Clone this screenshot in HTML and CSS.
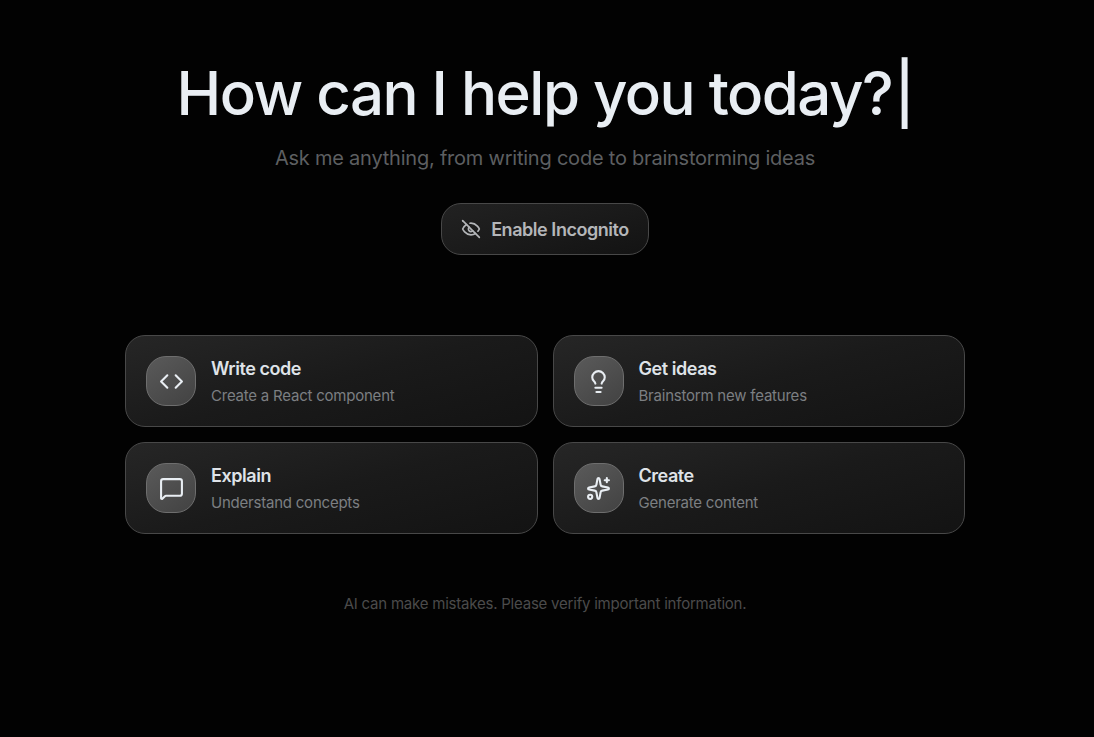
FILE: index.html
```html
<!DOCTYPE html>
<html lang="en">
<head>
<meta charset="utf-8">
<meta name="viewport" content="width=device-width, initial-scale=1">
<title>Assistant</title>
<link rel="stylesheet" href="styles.css">
</head>
<body>
<main class="welcome">
  <header class="hero">
    <h1 class="hero-title">How can I help you today?<span class="caret" aria-hidden="true">|</span></h1>
    <p class="hero-subtitle">Ask me anything, from writing code to brainstorming ideas</p>
    <button class="incognito" type="button">
      <svg class="icon-small" viewBox="0 0 24 24" aria-hidden="true"><path d="M9.88 9.88a3 3 0 1 0 4.24 4.24"/><path d="M10.73 5.08A10.43 10.43 0 0 1 12 5c7 0 10 7 10 7a13.16 13.16 0 0 1-1.67 2.68"/><path d="M6.61 6.61A13.526 13.526 0 0 0 2 12s3 7 10 7a9.74 9.74 0 0 0 5.39-1.61"/><path d="M2 2l20 20"/></svg>
      <span class="incognito-label">Enable Incognito</span>
    </button>
  </header>

  <section class="suggestions" aria-label="Suggestions">
    <button class="card" type="button">
      <span class="badge"><svg class="icon" viewBox="0 0 24 24" aria-hidden="true"><path d="m16 18 6-6-6-6"/><path d="m8 6-6 6 6 6"/></svg></span>
      <span class="card-text"><span class="card-title">Write code</span><span class="card-desc">Create a React component</span></span>
    </button>
    <button class="card" type="button">
      <span class="badge"><svg class="icon" viewBox="0 0 24 24" aria-hidden="true"><path d="M15 14c.2-1 .7-1.7 1.5-2.5 1-.9 1.5-2.2 1.5-3.5A6 6 0 0 0 6 8c0 1 .2 2.2 1.5 3.5.7.7 1.3 1.5 1.5 2.5"/><path d="M9 18h6"/><path d="M10 22h4"/></svg></span>
      <span class="card-text"><span class="card-title">Get ideas</span><span class="card-desc">Brainstorm new features</span></span>
    </button>
    <button class="card" type="button">
      <span class="badge"><svg class="icon" viewBox="0 0 24 24" aria-hidden="true"><path d="M22 17a2 2 0 0 1-2 2H6.828a2 2 0 0 0-1.414.586l-2.202 2.202A.71.71 0 0 1 2 21.286V5a2 2 0 0 1 2-2h16a2 2 0 0 1 2 2z"/></svg></span>
      <span class="card-text"><span class="card-title">Explain</span><span class="card-desc">Understand concepts</span></span>
    </button>
    <button class="card" type="button">
      <span class="badge"><svg class="icon" viewBox="0 0 24 24" aria-hidden="true"><path d="M11.017 2.814a1 1 0 0 1 1.966 0l1.051 5.558a2 2 0 0 0 1.594 1.594l5.558 1.051a1 1 0 0 1 0 1.966l-5.558 1.051a2 2 0 0 0-1.594 1.594l-1.051 5.558a1 1 0 0 1-1.966 0l-1.051-5.558a2 2 0 0 0-1.594-1.594l-5.558-1.051a1 1 0 0 1 0-1.966l5.558-1.051a2 2 0 0 0 1.594-1.594z"/><path d="M20 2v4"/><path d="M22 4h-4"/><circle cx="4" cy="20" r="2"/></svg></span>
      <span class="card-text"><span class="card-title">Create</span><span class="card-desc">Generate content</span></span>
    </button>
  </section>

  <p class="disclaimer">AI can make mistakes. Please verify important information.</p>
</main>
</body>
</html>
```
FILE: styles.css
```css
* {
  box-sizing: border-box;
}

body {
  margin: 0;
  min-height: 100vh;
  background: #020202;
  color: #e9eef3;
  font-family: Inter, "Liberation Sans", sans-serif;
  font-size: 20px;
  letter-spacing: -0.011em;
}

h1,
p {
  margin: 0;
}

button {
  font: inherit;
  letter-spacing: inherit;
  color: inherit;
  cursor: pointer;
}

svg {
  display: block;
  fill: none;
  stroke: currentColor;
  stroke-width: 2;
  stroke-linecap: round;
  stroke-linejoin: round;
}

.welcome {
  display: flex;
  flex-direction: column;
  align-items: center;
  padding: 56px 24px 40px 20px;
}

.hero {
  display: flex;
  flex-direction: column;
  align-items: center;
  text-align: center;
}

.hero-title {
  font-size: 60px;
  line-height: 75px;
  font-weight: 500;
  letter-spacing: -0.025em;
}

.caret {
  margin-left: 2px;
}

.hero-subtitle {
  margin-top: 12px;
  font-size: 20px;
  line-height: 30px;
  color: #5d5f61;
}

.incognito {
  display: flex;
  align-items: center;
  gap: 10px;
  margin-top: 30px;
  padding: 12px 19px;
  border: 1px solid #484848;
  border-radius: 20px;
  background: linear-gradient(165deg, #222, #131313);
  color: #b4b6b9;
  font-size: 18px;
  line-height: 24px;
  font-weight: 600;
  letter-spacing: -0.025em;
}

.incognito-label {
  padding-top: 2px;
}

.icon-small {
  width: 20px;
  height: 20px;
}

.suggestions {
  display: grid;
  grid-template-columns: repeat(2, minmax(0, 1fr));
  gap: 15px;
  width: 100%;
  max-width: 840px;
  margin-top: 80px;
}

.card {
  display: flex;
  align-items: center;
  gap: 15px;
  padding: 20px;
  border: 1px solid #484848;
  border-radius: 20px;
  background: linear-gradient(165deg, #262626, #1a1a1a 50%, #131313);
  text-align: left;
}

.badge {
  display: flex;
  align-items: center;
  justify-content: center;
  flex: none;
  width: 50px;
  height: 50px;
  border: 1px solid #6e6e6e;
  border-radius: 20px;
  background: linear-gradient(145deg, #5a5a5a, #424242);
}

.icon {
  width: 25px;
  height: 25px;
}

.card-text {
  display: flex;
  flex-direction: column;
  gap: 5px;
  padding-top: 1px;
}

.card-title {
  font-size: 18px;
  line-height: 24px;
  font-weight: 600;
  letter-spacing: -0.025em;
  color: #dfe3e8;
}

.card-desc {
  font-size: 15px;
  line-height: 20px;
  color: #7c7f82;
}

.disclaimer {
  margin-top: 60px;
  font-size: 15px;
  line-height: 20px;
  color: #4b4b4b;
}

@media (max-width: 640px) {
  .hero-title {
    font-size: 40px;
    line-height: 50px;
  }

  .suggestions {
    grid-template-columns: 1fr;
  }
}
```
